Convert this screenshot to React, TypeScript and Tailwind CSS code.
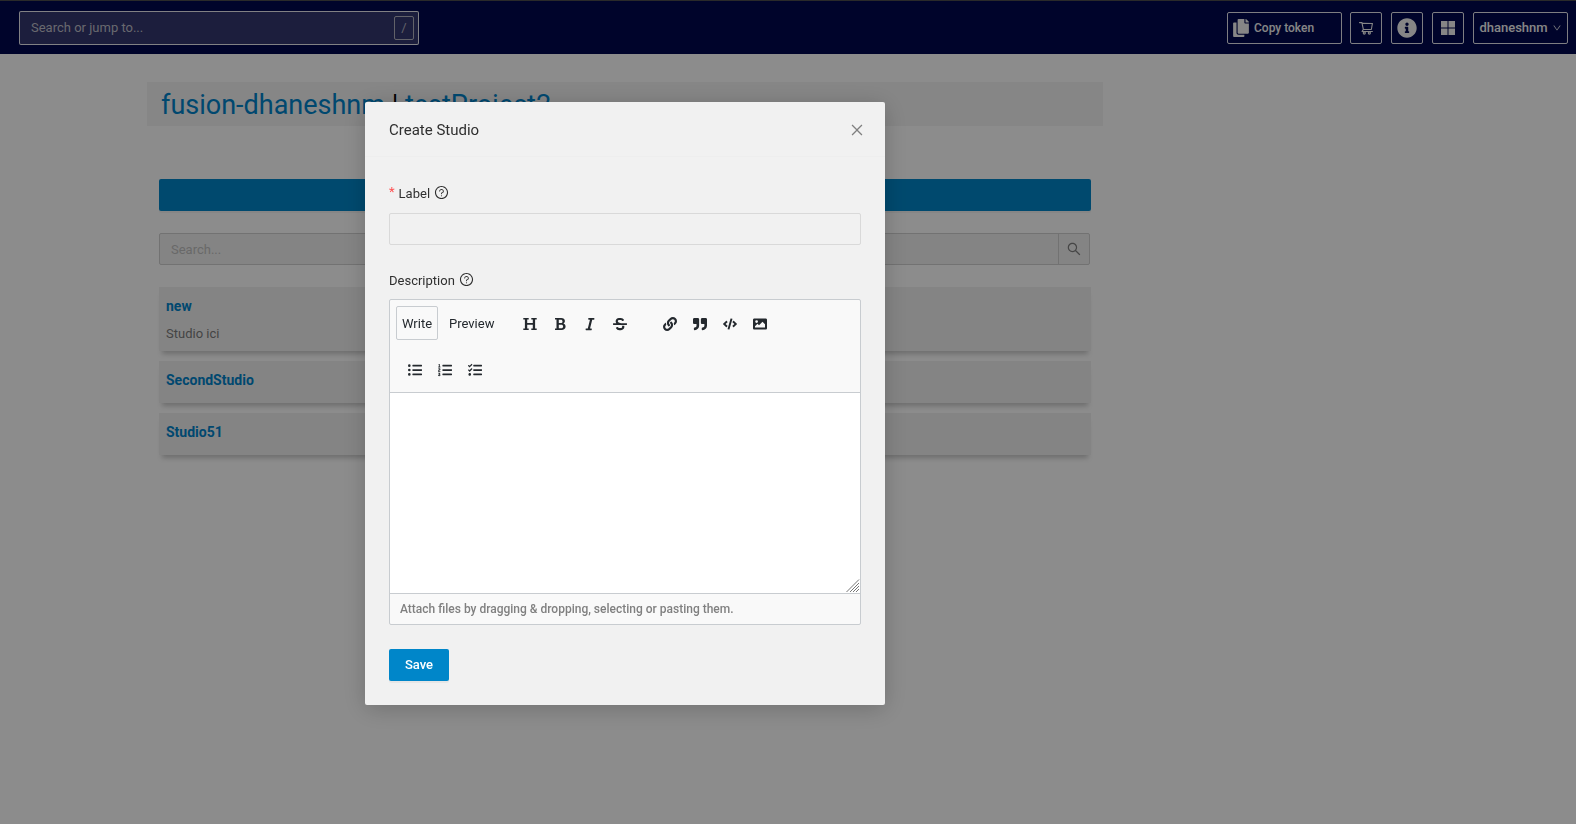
import type { ReactNode } from "react";
import {
  AiOutlineClose,
  AiOutlineDown,
  AiOutlineQuestionCircle,
  AiOutlineSearch,
  AiOutlineShoppingCart,
} from "react-icons/ai";
import {
  FaCode,
  FaCopy,
  FaInfoCircle,
  FaItalic,
  FaLink,
  FaListOl,
  FaListUl,
  FaQuoteRight,
  FaStrikethrough,
  FaTasks,
} from "react-icons/fa";

interface Studio {
  label: string;
  description?: string;
}

interface IconProps {
  className?: string;
}

const studios: Studio[] = [
  { label: "new", description: "Studio ici" },
  { label: "SecondStudio" },
  { label: "Studio51" },
];

function HeadingIcon({ className }: IconProps) {
  return (
    <svg viewBox="0 0 14 14" className={className} fill="currentColor">
      <path d="M.3 1h5.4v1.6H4.2v3.5h5.6V2.6H8.3V1h5.4v1.6h-1.6v8.8h1.6V13H8.3v-1.6h1.5V7.8H4.2v3.6h1.5V13H.3v-1.6h1.6V2.6H.3z" />
    </svg>
  );
}

function BoldIcon({ className }: IconProps) {
  return (
    <svg viewBox="0 0 14 14" className={className} fill="currentColor" fillRule="evenodd">
      <path d="M2 1h6.2c2.2 0 3.7 1.1 3.7 3 0 1.200-.6 2.100-1.600 2.600 1.400.4 2.300 1.500 2.300 3 0 2.200-1.700 3.400-4.100 3.400H2v-1.600h1.500V2.600H2zm3.800 1.700v3.400h2c1.100 0 1.700-.6 1.700-1.700s-.6-1.700-1.700-1.700zm0 5v3.600h2.400c1.200 0 1.900-.6 1.900-1.800s-.7-1.800-1.900-1.800z" />
    </svg>
  );
}

function ImageIcon({ className }: IconProps) {
  return (
    <svg viewBox="0 0 14 14" className={className} fill="currentColor" fillRule="evenodd">
      <path d="M1.300 1.500h11.400c.7 0 1.300.6 1.300 1.300v8.400c0 .7-.6 1.300-1.300 1.300H1.300C.6 12.500 0 11.900 0 11.200V2.800c0-.7.6-1.300 1.300-1.300zM2 10.500h10V7.300L9.500 4.800 6 8.300 4.500 6.800 2 9.300zM3.600 3.200a1.400 1.400 0 1 0 0 2.800 1.400 1.400 0 0 0 0-2.800z" />
    </svg>
  );
}

const textTools = [
  { name: "Heading", Icon: HeadingIcon },
  { name: "Bold", Icon: BoldIcon },
  { name: "Italic", Icon: FaItalic },
  { name: "Strikethrough", Icon: FaStrikethrough },
];

const insertTools = [
  { name: "Link", Icon: FaLink },
  { name: "Quote", Icon: FaQuoteRight },
  { name: "Code", Icon: FaCode },
  { name: "Image", Icon: ImageIcon },
];

const listTools = [
  { name: "Unordered list", Icon: FaListUl },
  { name: "Ordered list", Icon: FaListOl },
  { name: "Checked list", Icon: FaTasks },
];

function HeaderButton({ label, children }: { label: string; children: ReactNode }) {
  return (
    <button
      aria-label={label}
      className="flex size-8 items-center justify-center rounded-xs border border-white/90"
    >
      {children}
    </button>
  );
}

function Header() {
  return (
    <header className="flex h-[54px] items-center justify-between border-t border-[#4d4d4d] bg-[#00094f] pl-[19px] pr-2 text-white">
      <div className="flex h-[34px] w-[400px] items-center rounded-xs border border-white/90 bg-[#33376f] pl-[11px] pr-1">
        <input
          aria-label="Search or jump to"
          placeholder="Search or jump to..."
          className="min-w-0 flex-1 bg-transparent pt-px outline-none placeholder:text-[#bfbfc9]"
        />
        <kbd className="flex h-6 w-5 items-center justify-center rounded-xs border border-[#b3b3c0] font-[Roboto,sans-serif] text-[#b3b3c0]">
          /
        </kbd>
      </div>
      <div className="flex items-center text-[#f4f4f4]">
        <button className="mr-2 flex h-8 w-[115px] items-center gap-1 rounded-xs border border-white/90 pl-1 text-xs font-medium">
          <FaCopy className="size-[18px]" />
          Copy token
        </button>
        <div className="flex items-center gap-[9px]">
          <HeaderButton label="Cart">
            <AiOutlineShoppingCart className="size-4" />
          </HeaderButton>
          <HeaderButton label="Information">
            <FaInfoCircle className="size-5" />
          </HeaderButton>
          <HeaderButton label="Applications">
            <svg viewBox="0 0 14 14" className="size-[14px]" fill="currentColor">
              <path d="M0 0h6.5v6.5H0zM7.5 0H14v6.500H7.500zM0 7.500h6.500V14H0zM7.500 7.500H14V14H7.500z" />
            </svg>
          </HeaderButton>
          <button className="flex h-8 w-[95px] items-center justify-center gap-1 rounded-xs border border-white/90 pt-px font-medium">
            dhaneshnm
            <AiOutlineDown className="size-[10px]" />
          </button>
        </div>
      </div>
    </header>
  );
}

function StudioCard({ label, description }: Studio) {
  return (
    <li className="bg-[#f1f1f1] px-[7px] pt-2 pb-3 shadow-[0_6px_5px_-3px_rgba(0,0,0,0.22)]">
      <a href="#" className="block text-sm leading-[22px] font-bold text-[#0083cb]">
        {label}
      </a>
      {description && <p className="-mb-1 pt-2 leading-[18px] text-[#7c7c7c]">{description}</p>}
    </li>
  );
}

function ToolGroup({ tools }: { tools: typeof textTools }) {
  return (
    <div className="flex h-[46px] items-center pt-[2px]">
      {tools.map(({ name, Icon }) => (
        <button
          key={name}
          type="button"
          aria-label={name}
          className="flex size-[30px] items-center justify-center"
        >
          <Icon className="size-[14px]" />
        </button>
      ))}
    </div>
  );
}

function Editor() {
  return (
    <div className="rounded-xs border border-[#c8ccd0] bg-[#f9f9f9]">
      <div className="flex flex-wrap border-b border-[#c8ccd0] text-[#24292e]">
        <div className="flex w-[125px] items-center py-[6px] pl-[6px]">
          <button
            type="button"
            className="h-[34px] w-[42px] rounded-xs border border-[#c8ccd0] pt-px"
          >
            Write
          </button>
          <button type="button" className="h-[34px] px-[11px] pt-px">
            Preview
          </button>
        </div>
        <ToolGroup tools={textTools} />
        <div className="w-5" />
        <ToolGroup tools={insertTools} />
        <div className="w-full pl-[10px]">
          <ToolGroup tools={listTools} />
        </div>
      </div>
      <div className="relative">
        <textarea
          id="description"
          className="block h-[200px] w-full resize-none bg-white p-[10px] outline-none"
        />
        <svg
          viewBox="0 0 14 14"
          className="absolute right-0 bottom-0 size-[14px]"
          stroke="#777"
          fill="none"
        >
          <path d="M.5 13 13 .5M4 13 13 4M7 13 13 7M10 13 13 10" />
        </svg>
      </div>
      <p className="border-t border-[#c8ccd0] px-[10px] text-xs leading-[30px] font-medium text-[#808080]">
        Attach files by dragging &amp; dropping, selecting or pasting them.
      </p>
    </div>
  );
}

function CreateStudioModal() {
  return (
    <div
      role="dialog"
      aria-labelledby="modal-title"
      className="w-[520px] rounded-xs bg-[#f1f1f1] text-[#2f2f2f] shadow-[0_4px_24px_rgba(0,0,0,0.2)]"
    >
      <div className="flex items-center justify-between border-b border-[#eeeeee] pt-[17px] pr-5 pb-[15px] pl-6">
        <h2 id="modal-title" className="text-[15px] leading-[22px]">
          Create Studio
        </h2>
        <button aria-label="Close" className="text-[#808080]">
          <AiOutlineClose className="size-4" />
        </button>
      </div>
      <form className="p-6">
        <div className="flex h-8 items-start gap-1 leading-[26px]">
          <span className="leading-[22px] text-[#ff4d4f]">*</span>
          <label htmlFor="label">Label</label>
          <AiOutlineQuestionCircle className="mt-1 size-[15px]" />
        </div>
        <input
          id="label"
          className="block h-8 w-full rounded-xs border border-[#d9d9d9] px-[11px] outline-none"
        />
        <div className="mt-6 flex h-[30px] items-start gap-1 leading-6">
          <label htmlFor="description">Description</label>
          <AiOutlineQuestionCircle className="mt-[3px] size-[15px]" />
        </div>
        <Editor />
        <button
          type="button"
          className="mt-6 block h-8 w-[60px] rounded-xs bg-[#0086c9] font-medium text-white shadow-[0_2px_0_rgba(0,0,0,0.045)]"
        >
          Save
        </button>
      </form>
    </div>
  );
}

export default function App() {
  return (
    <div className="min-h-screen bg-white font-[Roboto,sans-serif] text-[13px]">
      <Header />
      <main className="ml-[147px] max-w-[956px] pt-7">
        <h1 className="h-11 bg-[#f4f4f4] pl-[14px] text-[27px] leading-[46px] text-black">
          <a href="#" className="text-[#0083cb]">
            fusion-dhaneshnm
          </a>{" "}
          |{" "}
          <a href="#" className="text-[#0083cb]">
            testProject2
          </a>
        </h1>
        <div className="px-3 pt-[53px]">
          <button
            aria-label="Create studio"
            className="block h-8 w-full rounded-xs bg-[#0086c9] shadow-[0_2px_0_rgba(0,0,0,0.045)]"
          />
          <div className="mt-[22px] mr-px flex h-8 rounded-xs border border-[#d0d0d0] bg-[#f1f1f1]">
            <input
              aria-label="Search studios"
              placeholder="Search..."
              className="min-w-0 flex-1 px-[11px] pt-px outline-none placeholder:text-[#bfbfbf]"
            />
            <button
              aria-label="Search"
              className="flex w-[31px] items-center justify-center border-l border-[#d0d0d0] text-[#808080]"
            >
              <AiOutlineSearch className="size-4" />
            </button>
          </div>
          <ul className="mt-[22px] flex flex-col gap-[10px]">
            {studios.map((studio) => (
              <StudioCard key={studio.label} {...studio} />
            ))}
          </ul>
        </div>
      </main>
      <div className="fixed inset-0 bg-black/45">
        <div className="ml-[147px] flex max-w-[956px] justify-center pt-[102px]">
          <CreateStudioModal />
        </div>
      </div>
    </div>
  );
}
